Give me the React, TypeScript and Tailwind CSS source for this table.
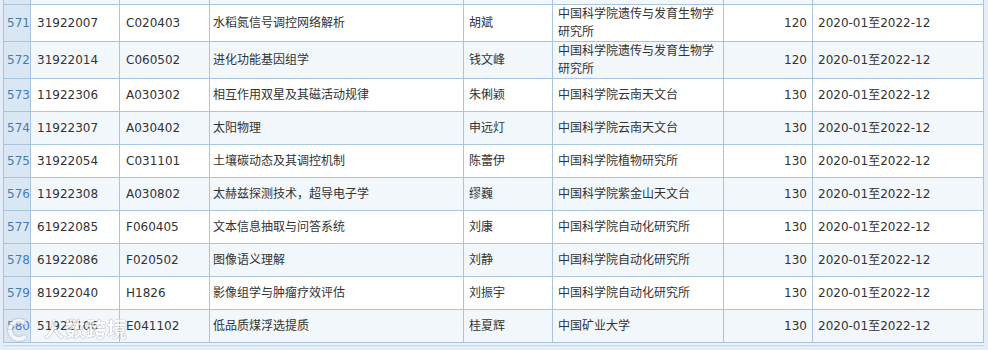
import React from "react";

interface Grant {
  no: number;
  id: string;
  code: string;
  title: string;
  leader: string;
  org: string;
  amount: number;
  period: string;
}

const grants: Grant[] = [
  { no: 571, id: "31922007", code: "C020403", title: "水稻氮信号调控网络解析", leader: "胡斌", org: "中国科学院遗传与发育生物学研究所", amount: 120, period: "2020-01至2022-12" },
  { no: 572, id: "31922014", code: "C060502", title: "进化功能基因组学", leader: "钱文峰", org: "中国科学院遗传与发育生物学研究所", amount: 120, period: "2020-01至2022-12" },
  { no: 573, id: "11922306", code: "A030302", title: "相互作用双星及其磁活动规律", leader: "朱俐颖", org: "中国科学院云南天文台", amount: 130, period: "2020-01至2022-12" },
  { no: 574, id: "11922307", code: "A030402", title: "太阳物理", leader: "申远灯", org: "中国科学院云南天文台", amount: 130, period: "2020-01至2022-12" },
  { no: 575, id: "31922054", code: "C031101", title: "土壤碳动态及其调控机制", leader: "陈蕾伊", org: "中国科学院植物研究所", amount: 130, period: "2020-01至2022-12" },
  { no: 576, id: "11922308", code: "A030802", title: "太赫兹探测技术，超导电子学", leader: "缪巍", org: "中国科学院紫金山天文台", amount: 130, period: "2020-01至2022-12" },
  { no: 577, id: "61922085", code: "F060405", title: "文本信息抽取与问答系统", leader: "刘康", org: "中国科学院自动化研究所", amount: 130, period: "2020-01至2022-12" },
  { no: 578, id: "61922086", code: "F020502", title: "图像语义理解", leader: "刘静", org: "中国科学院自动化研究所", amount: 130, period: "2020-01至2022-12" },
  { no: 579, id: "81922040", code: "H1826", title: "影像组学与肿瘤疗效评估", leader: "刘振宇", org: "中国科学院自动化研究所", amount: 130, period: "2020-01至2022-12" },
  { no: 580, id: "51922106", code: "E041102", title: "低品质煤浮选提质", leader: "桂夏辉", org: "中国矿业大学", amount: 130, period: "2020-01至2022-12" },
];

const cols = "grid grid-cols-[27px_89px_90px_254px_89px_171px_89px_171px]";
const cell = "border-r border-[#a9c5dd] flex items-center overflow-hidden";

export default function App() {
  return (
    <div
      className="relative w-[988px] h-[350px] overflow-hidden bg-[#e2edf8] text-[12px] leading-[18px] text-[#333]"
      style={{ fontFamily: '"DejaVu Sans", "Noto Sans CJK SC", sans-serif' }}
    >
      <div className="ml-[3px] w-[981px] border-l border-[#a9c5dd]">
        {/* tail of the previous row */}
        <div className={`${cols} h-[5px] bg-[#f2f7fc] border-b border-[#a9c5dd]`}>
          <div className={`${cell} bg-[#d9e7f4]`} />
          <div className={cell} />
          <div className={cell} />
          <div className={cell} />
          <div className={cell} />
          <div className={cell} />
          <div className={cell} />
          <div className={cell} />
        </div>

        {grants.map((g, i) => (
          <div
            key={g.no}
            className={`${cols} border-b border-[#a9c5dd] ${i < 2 ? "h-[37px]" : "h-[33px]"} ${i % 2 === 0 ? "bg-white" : "bg-[#f2f7fc]"}`}
          >
            <div className={`${cell} bg-[#d9e7f4] pl-[3px] text-[#4a7bb0] whitespace-nowrap`}>{g.no}</div>
            <div className={`${cell} px-[6px]`}>{g.id}</div>
            <div className={`${cell} px-[6px]`}>{g.code}</div>
            <div className={`${cell} px-[3px]`}>{g.title}</div>
            <div className={`${cell} px-[5px]`}>{g.leader}</div>
            <div className={`${cell} px-[5px]`}>
              <span>{g.org}</span>
            </div>
            <div className={`${cell} px-[5px] justify-end`}>{g.amount}</div>
            <div className={`${cell} px-[5px] whitespace-nowrap`}>{g.period}</div>
          </div>
        ))}
      </div>
      <div className="ml-[3px] w-[981px] h-[3px] border-b border-[#c3d7ea] bg-[#eaf2fa]" />

      {/* watermark */}
      <div className="absolute left-[8px] top-[316px] flex items-center gap-[14px] opacity-70 pointer-events-none">
        <div className="w-[22px] h-[22px] rounded-full border-[4px] border-white border-r-transparent [filter:drop-shadow(0_0_1px_#888)]" />
        <span
          className="text-[20px] leading-[28px] text-white font-bold tracking-[1px]"
          style={{ textShadow: "0 0 1px #777, 0 0 1px #777" }}
        >
          人数跨境
        </span>
      </div>
    </div>
  );
}
